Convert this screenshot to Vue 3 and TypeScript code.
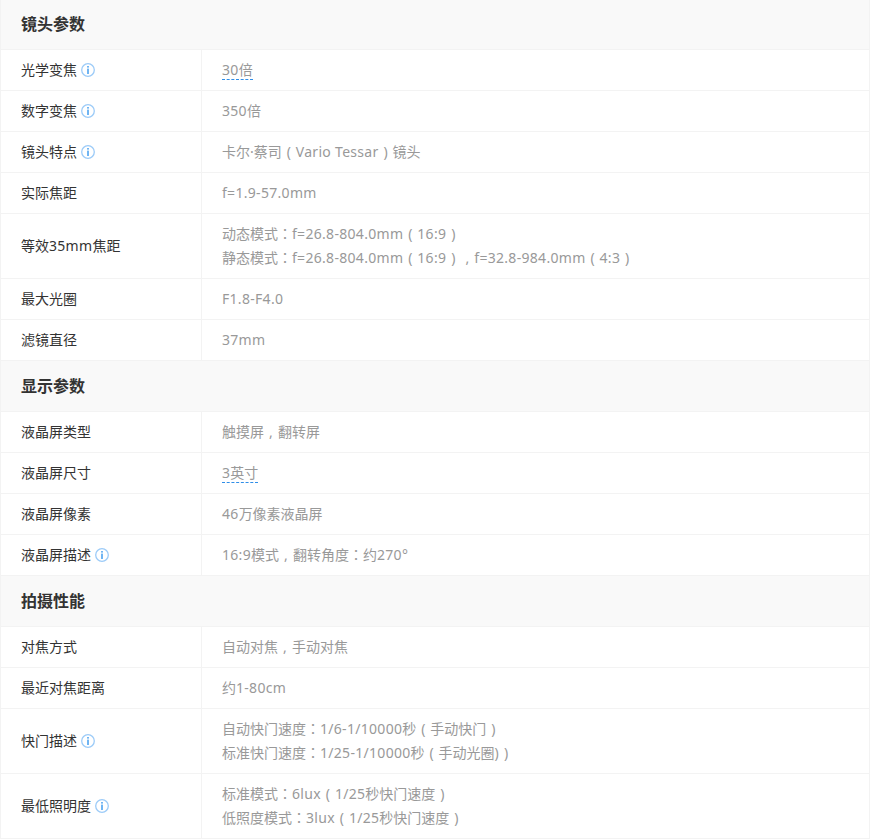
<script setup lang="ts">
interface Row { label: string; values: string[]; info?: boolean; link?: boolean }
interface Section { title: string; rows: Row[] }
interface Part { text: string; kind: string }

const sections: Section[] = [
  { title: '镜头参数', rows: [
    { label: '光学变焦', values: ['30倍'], info: true, link: true },
    { label: '数字变焦', values: ['350倍'], info: true },
    { label: '镜头特点', values: ['卡尔·蔡司（Vario Tessar）镜头'], info: true },
    { label: '实际焦距', values: ['f=1.9-57.0mm'] },
    { label: '等效35mm焦距', values: ['动态模式：f=26.8-804.0mm（16:9）', '静态模式：f=26.8-804.0mm（16:9），f=32.8-984.0mm（4:3）'] },
    { label: '最大光圈', values: ['F1.8-F4.0'] },
    { label: '滤镜直径', values: ['37mm'] },
  ]},
  { title: '显示参数', rows: [
    { label: '液晶屏类型', values: ['触摸屏，翻转屏'] },
    { label: '液晶屏尺寸', values: ['3英寸'], link: true },
    { label: '液晶屏像素', values: ['46万像素液晶屏'] },
    { label: '液晶屏描述', values: ['16:9模式，翻转角度：约270°'], info: true },
  ]},
  { title: '拍摄性能', rows: [
    { label: '对焦方式', values: ['自动对焦，手动对焦'] },
    { label: '最近对焦距离', values: ['约1-80cm'] },
    { label: '快门描述', values: ['自动快门速度：1/6-1/10000秒（手动快门）', '标准快门速度：1/25-1/10000秒（手动光圈)）'], info: true },
    { label: '最低照明度', values: ['标准模式：6lux（1/25秒快门速度）', '低照度模式：3lux（1/25秒快门速度）'], info: true },
  ]},
]

const centred: Record<string, string> = { '（': '(', '）': ')', '，': ',' }

function split(text: string): Part[] {
  const found = text.match(/[A-Za-z0-9=.\-:°/ )]+|（|）|：|，|[^A-Za-z0-9=.\-:°/ )（）：，]+/g) ?? []
  return found.map((t) => {
    if (centred[t]) return { text: centred[t], kind: 'box' }
    if (t === '：') return { text: t, kind: 'mid' }
    if (/^[A-Za-z0-9=.\-:°/ )]/.test(t)) return { text: t, kind: 'latin' }
    return { text: t, kind: 'cjk' }
  })
}
</script>

<template>
  <div class="spec">
    <section v-for="s in sections" :key="s.title">
      <h3 class="head">{{ s.title }}</h3>
      <div v-for="r in s.rows" :key="r.label" class="row">
        <div class="label">
          <span><span v-for="(p, i) in split(r.label)" :key="i" :class="p.kind">{{ p.text }}</span></span>
          <svg v-if="r.info" class="info" width="14" height="14" viewBox="0 0 14 14" aria-hidden="true">
            <circle cx="7" cy="7" r="6.3" fill="none" stroke="#9ccbf8" stroke-width="1.3" />
            <rect x="6.2" y="3" width="1.6" height="1.6" fill="#4ea3f0" />
            <rect x="6.2" y="5.6" width="1.6" height="5.4" fill="#4ea3f0" />
          </svg>
        </div>
        <div class="value">
          <div v-for="v in r.values" :key="v" class="line">
            <span :class="{ link: r.link }"><span v-for="(p, i) in split(v)" :key="i" :class="p.kind">{{ p.text }}</span></span>
          </div>
        </div>
      </div>
    </section>
  </div>
</template>

<style>
html, body { background: #fff; overflow: hidden; }
</style>

<style scoped>
.spec {
  width: 870px;
  box-sizing: border-box;
  border-left: 1px solid #f3f3f3;
  border-right: 1px solid #f3f3f3;
  font-family: "Noto Sans", "Noto Sans CJK SC", sans-serif;
  font-size: 14px;
}
.head {
  margin: 0;
  height: 50px;
  box-sizing: border-box;
  padding-left: 20px;
  border-bottom: 1px solid #f3f3f3;
  background: #f9f9f9;
  color: #333;
  font-size: 16px;
  font-weight: 700;
  line-height: 49px;
}
section + section .head { height: 51px; line-height: 50px; }
.row {
  display: flex;
  border-bottom: 1px solid #f3f3f3;
}
.label {
  width: 201px;
  box-sizing: border-box;
  padding-left: 20px;
  display: flex;
  align-items: center;
  gap: 4px;
  color: #333;
  line-height: 24px;
  border-right: 1px solid #f3f3f3;
}
.info { flex: none; }
.value {
  flex: 1;
  padding: 8px 20px;
  color: #999;
}
.line { height: 24px; line-height: 24px; }
.link {
  display: inline-block;
  height: 21px;
  border-bottom: 1px dashed #2f8ee8;
}
.cjk, .latin, .mid, .box { line-height: 0; }
.latin { letter-spacing: 0.3px; }
.mid { font-family: "Noto Sans CJK TC", sans-serif; }
.box {
  display: inline-block;
  width: 14px;
  text-align: center;
}
</style>
